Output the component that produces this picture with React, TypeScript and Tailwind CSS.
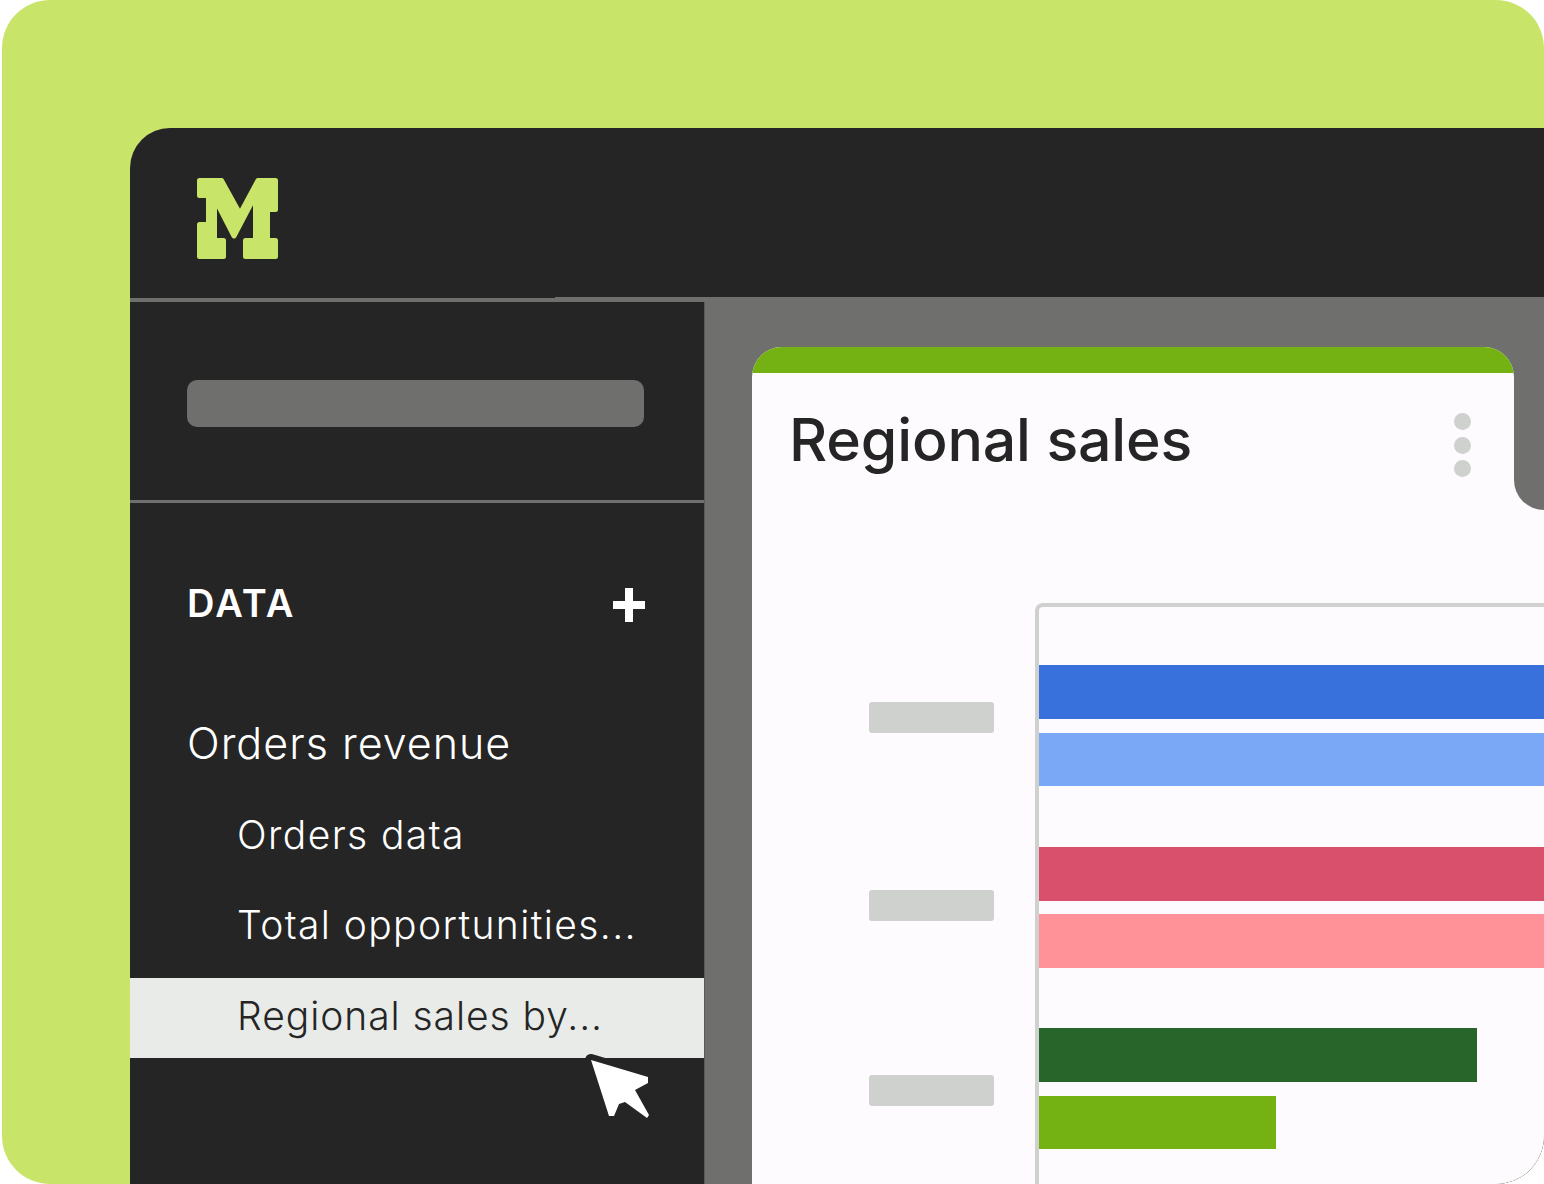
const font = "font-['Inter','Liberation_Sans',sans-serif]";

function Logo() {
  return (
    <svg width="81" height="81" viewBox="0 0 81 81" className="block">
      <path
        fill="#C8E56A"
        stroke="#C8E56A"
        strokeWidth="5"
        strokeLinejoin="round"
        d="M2.5 2.5H24.5L43 36L61 2.5H78.5V31.5H70.5V62.5H78.5V78.5H48.5V62.5H58.5V17L37 58L17.5 20V62.5H26.5V78.5H2.5V46.5H11.5V17.5H2.5Z"
      />
    </svg>
  );
}

function Cursor() {
  const d = "M11 10L68 27V33L55 40L69 65L67 68L45 52L39 54L34 66L29 66Z";
  return (
    <svg width="80" height="80" viewBox="0 0 80 80" className="block">
      <path fill="#252525" stroke="#252525" strokeWidth="12" strokeLinejoin="round" d={d} />
      <path fill="#FFFFFF" d={d} />
    </svg>
  );
}

export default function App() {
  return (
    <div className={`h-[1184px] w-[1544px] overflow-hidden bg-white pl-[2px] ${font}`}>
      <div className="h-full overflow-hidden rounded-[48px] bg-[#C8E56A] pl-[128px] pt-[128px]">
        <div className="flex h-full flex-col overflow-hidden rounded-tl-[40px] bg-[#252525]">
          {/* top bar */}
          <div className="flex h-[170px] shrink-0 flex-col justify-between pt-[50px]">
            <div className="pl-[67px]">
              <Logo />
            </div>
            <div className="ml-[425px] h-px bg-[#6F6F6D]" />
          </div>

          <div className="flex flex-1 border-t-[4px] border-[#6F6F6D]">
            {/* sidebar */}
            <aside className="flex w-[575px] shrink-0 flex-col border-r border-[#5A5A58] bg-[#252525] text-white">
              <div className="h-[201px] border-b-[3px] border-[#6F6F6D] pl-[57px] pt-[78px]">
                <div className="h-[47px] w-[457px] rounded-[10px] bg-[#6F6F6D]" />
              </div>
              <div className="flex items-center justify-between pl-[57px] pr-[59px] pt-[78px]">
                <span className="text-[38px] font-semibold leading-[44px] tracking-[2.2px]">DATA</span>
                <svg width="32" height="34" viewBox="0 0 32 34" className="mt-[3px]">
                  <path fill="#FFFFFF" d="M12 0H20V13H32V21H20V34H12V21H0V13H12Z" />
                </svg>
              </div>
              <div className="mt-[93px] pl-[57px] text-[43px] font-light leading-[50px] tracking-[1px]">Orders revenue</div>
              <div className="mt-[45px] pl-[107px] text-[39px] font-light leading-[44px] tracking-[1.4px]">Orders data</div>
              <div className="mt-[46px] pl-[107px] text-[39px] font-light leading-[44px] tracking-[1.4px]">Total opportunities...</div>
              <div className="relative mt-[31px] h-[80px] bg-[#E9EBE8] pl-[107px] pt-[16px] text-[39px] font-light leading-[44px] tracking-[0.95px] text-[#252525]">
                Regional sales by...
                <div className="absolute left-[450px] top-[72px]">
                  <Cursor />
                </div>
              </div>
            </aside>

            {/* main */}
            <main className="flex-1 bg-[#6F6F6D] pl-[47px] pt-[45px]">
              <div className="flex h-full flex-col overflow-hidden">
                <div className="flex h-[163px] shrink-0">
                  <div className="flex w-[762px] flex-col overflow-hidden rounded-t-[30px] bg-[#FDFBFD]">
                    <div className="h-[26px] bg-[#74B214]" />
                    <div className="flex items-start justify-between pl-[37px] pr-[43px]">
                      <h1 className="mt-[31px] text-[59px] font-medium leading-[72px] tracking-[-0.15px] text-[#252525]">Regional sales</h1>
                      <div className="mt-[40px] flex flex-col gap-[6.5px]">
                        <div className="h-[17px] w-[17px] rounded-full bg-[#CFD1CE]" />
                        <div className="h-[17px] w-[17px] rounded-full bg-[#CFD1CE]" />
                        <div className="h-[17px] w-[17px] rounded-full bg-[#CFD1CE]" />
                      </div>
                    </div>
                  </div>
                  <div className="w-[30px] bg-[#FDFBFD]">
                    <div className="h-full rounded-bl-[30px] bg-[#6F6F6D]" />
                  </div>
                </div>

                {/* chart */}
                <div className="flex flex-1 bg-[#FDFBFD] pt-[93px]">
                  <div className="w-[283px] shrink-0 pl-[117px] pt-[99px]">
                    <div className="h-[31px] w-[125px] rounded-[3px] bg-[#CFD1CE]" />
                    <div className="mt-[157px] h-[31px] w-[125px] rounded-[3px] bg-[#CFD1CE]" />
                    <div className="mt-[154px] h-[31px] w-[125px] rounded-[3px] bg-[#CFD1CE]" />
                  </div>
                  <div className="flex-1 rounded-tl-[8px] border-l-[4px] border-t-[4px] border-[#CFD1CE] pt-[58px]">
                    <div className="flex flex-col gap-[14px]">
                      <div className="h-[54px] bg-[#3871DB]" />
                      <div className="h-[53px] bg-[#7BA7F7]" />
                    </div>
                    <div className="mt-[61px] flex flex-col gap-[13px]">
                      <div className="h-[54px] bg-[#D9506C]" />
                      <div className="h-[54px] bg-[#FF9298]" />
                    </div>
                    <div className="mt-[60px] flex flex-col gap-[14px]">
                      <div className="h-[54px] w-[438px] bg-[#27652A]" />
                      <div className="h-[53px] w-[236.5px] bg-[#74B214]" />
                    </div>
                  </div>
                </div>
              </div>
            </main>
          </div>
        </div>
      </div>
    </div>
  );
}
